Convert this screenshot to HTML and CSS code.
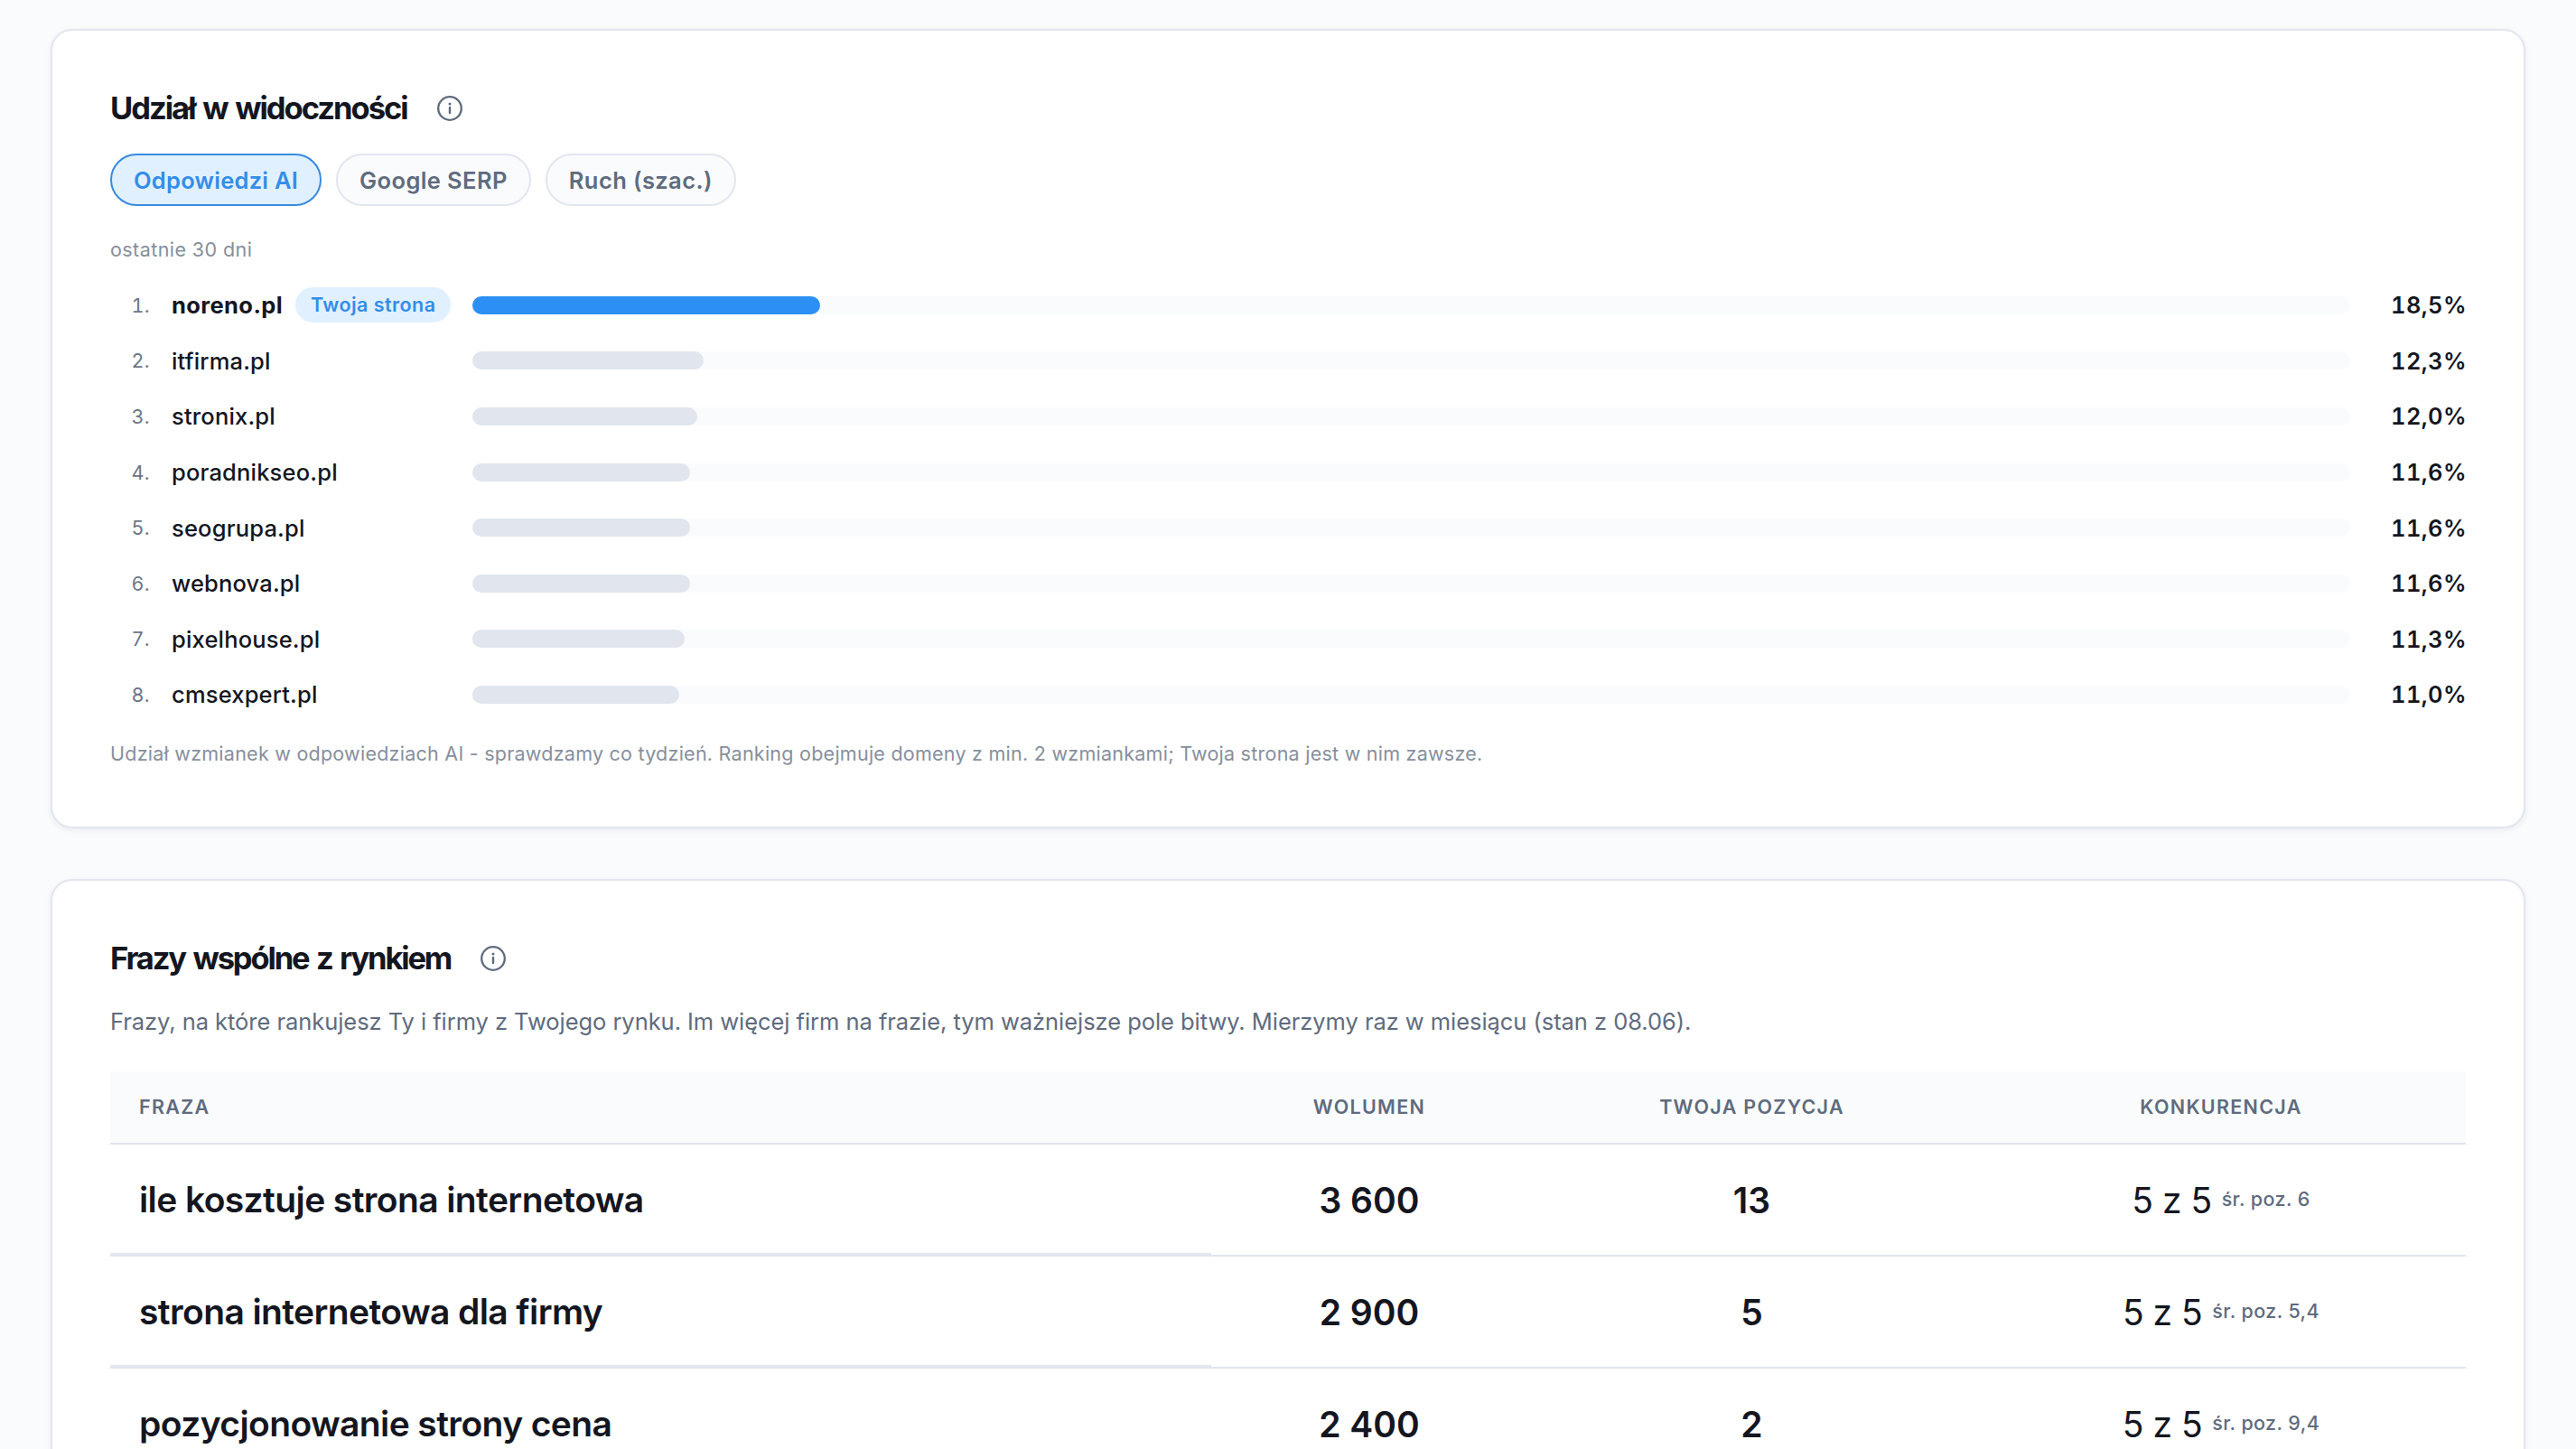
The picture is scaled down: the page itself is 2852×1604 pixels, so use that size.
FILE: index.html
```html
<!DOCTYPE html>
<html lang="pl">
<head>
  <meta charset="utf-8">
  <title>Widoczność</title>
  <link rel="stylesheet" href="styles.css">
</head>
<body>
  <main class="page">
    <section class="card">
      <div class="card-header">
        <h2 class="card-title">Udział w widoczności</h2>
        <svg class="info-icon" viewBox="0 0 28 28" fill="none">
          <circle cx="14" cy="14" r="12.8" stroke="currentColor" stroke-width="2.3"/>
          <circle cx="14" cy="9" r="1.5" fill="currentColor"/>
          <path d="M14 13v6" stroke="currentColor" stroke-width="2.4" stroke-linecap="round"/>
        </svg>
      </div>

      <div class="tabs">
        <button class="tab active">Odpowiedzi AI</button>
        <button class="tab">Google SERP</button>
        <button class="tab">Ruch (szac.)</button>
      </div>

      <p class="period">ostatnie 30 dni</p>

      <div class="ranking">
        <div class="rank-row own">
          <span class="rank-no">1.</span>
          <span class="rank-name">noreno.pl <span class="badge">Twoja strona</span></span>
          <div class="bar"><div class="bar-fill" style="width: 18.5%"></div></div>
          <span class="rank-value">18,5%</span>
        </div>
        <div class="rank-row">
          <span class="rank-no">2.</span>
          <span class="rank-name">itfirma.pl</span>
          <div class="bar"><div class="bar-fill" style="width: 12.3%"></div></div>
          <span class="rank-value">12,3%</span>
        </div>
        <div class="rank-row">
          <span class="rank-no">3.</span>
          <span class="rank-name">stronix.pl</span>
          <div class="bar"><div class="bar-fill" style="width: 12%"></div></div>
          <span class="rank-value">12,0%</span>
        </div>
        <div class="rank-row">
          <span class="rank-no">4.</span>
          <span class="rank-name">poradnikseo.pl</span>
          <div class="bar"><div class="bar-fill" style="width: 11.6%"></div></div>
          <span class="rank-value">11,6%</span>
        </div>
        <div class="rank-row">
          <span class="rank-no">5.</span>
          <span class="rank-name">seogrupa.pl</span>
          <div class="bar"><div class="bar-fill" style="width: 11.6%"></div></div>
          <span class="rank-value">11,6%</span>
        </div>
        <div class="rank-row">
          <span class="rank-no">6.</span>
          <span class="rank-name">webnova.pl</span>
          <div class="bar"><div class="bar-fill" style="width: 11.6%"></div></div>
          <span class="rank-value">11,6%</span>
        </div>
        <div class="rank-row">
          <span class="rank-no">7.</span>
          <span class="rank-name">pixelhouse.pl</span>
          <div class="bar"><div class="bar-fill" style="width: 11.3%"></div></div>
          <span class="rank-value">11,3%</span>
        </div>
        <div class="rank-row">
          <span class="rank-no">8.</span>
          <span class="rank-name">cmsexpert.pl</span>
          <div class="bar"><div class="bar-fill" style="width: 11%"></div></div>
          <span class="rank-value">11,0%</span>
        </div>
      </div>

      <p class="footnote">Udział wzmianek w odpowiedziach AI - sprawdzamy co tydzień. Ranking obejmuje domeny z min. 2 wzmiankami; Twoja strona jest w nim zawsze.</p>
    </section>

    <section class="card card-phrases">
      <div class="card-header">
        <h2 class="card-title">Frazy wspólne z rynkiem</h2>
        <svg class="info-icon" viewBox="0 0 28 28" fill="none">
          <circle cx="14" cy="14" r="12.8" stroke="currentColor" stroke-width="2.3"/>
          <circle cx="14" cy="9" r="1.5" fill="currentColor"/>
          <path d="M14 13v6" stroke="currentColor" stroke-width="2.4" stroke-linecap="round"/>
        </svg>
      </div>
      <p class="subtitle">Frazy, na które rankujesz Ty i firmy z Twojego rynku. Im więcej firm na frazie, tym ważniejsze pole bitwy. Mierzymy raz w miesiącu (stan z 08.06).</p>

      <table class="phrases">
        <thead>
          <tr>
            <th class="col-phrase">Fraza</th>
            <th class="col-volume">Wolumen</th>
            <th class="col-position">Twoja pozycja</th>
            <th class="col-rivals">Konkurencja</th>
          </tr>
        </thead>
        <tbody>
          <tr>
            <td class="phrase">ile kosztuje strona internetowa</td>
            <td class="number">3 600</td>
            <td class="number">13</td>
            <td><div class="rivals">5 z 5 <span class="avg">śr. poz. 6</span></div></td>
          </tr>
          <tr>
            <td class="phrase">strona internetowa dla firmy</td>
            <td class="number">2 900</td>
            <td class="number">5</td>
            <td><div class="rivals">5 z 5 <span class="avg">śr. poz. 5,4</span></div></td>
          </tr>
          <tr>
            <td class="phrase">pozycjonowanie strony cena</td>
            <td class="number">2 400</td>
            <td class="number">2</td>
            <td><div class="rivals">5 z 5 <span class="avg">śr. poz. 9,4</span></div></td>
          </tr>
        </tbody>
      </table>
    </section>
  </main>
</body>
</html>
```
FILE: styles.css
```css
* {
  box-sizing: border-box;
}

html {
  overflow: hidden;
}

body {
  height: 1604px;
  margin: 0;
  overflow: hidden;
  background: #fafbfd;
  color: #14161f;
  font-family: Inter, sans-serif;
  font-size: 25.5px;
}

h2, p {
  margin: 0;
}

.page {
  display: flex;
  flex-direction: column;
  gap: 56px;
  padding: 32px 56px 0;
}

.card {
  padding: 64px;
  background: #fff;
  border: 2px solid #e2e6ef;
  border-radius: 24px;
  box-shadow: 0 2px 6px rgba(20, 22, 50, 0.07);
}

.card-header {
  display: flex;
  align-items: center;
  gap: 33px;
  height: 44px;
}

.card-title {
  font-size: 34.5px;
  font-weight: 700;
  line-height: 44px;
  letter-spacing: -2px;
  word-spacing: 2.5px;
}

.card-phrases .card-title {
  letter-spacing: -2.15px;
}

.info-icon {
  width: 28px;
  height: 28px;
  color: #5f6b7e;
}

/* tabs */
.tabs {
  display: flex;
  gap: 16px;
  margin-top: 28px;
}

.tab {
  height: 58px;
  padding: 0 24px;
  background: #fafbfd;
  border: 2px solid #e2e6ef;
  border-radius: 29px;
  color: #5f6b7e;
  font-family: inherit;
  font-size: 25.5px;
  font-weight: 600;
  letter-spacing: 0.4px;
  white-space: nowrap;
}

.tab.active {
  background: #e0f0ff;
  border-color: #398be0;
  color: #338de9;
  letter-spacing: 0.25px;
}

.period {
  margin-top: 31px;
  color: #878f9d;
  font-size: 21.5px;
  line-height: 35px;
  letter-spacing: 0.43px;
}

/* ranking */
.ranking {
  display: flex;
  flex-direction: column;
  gap: 20px;
  margin-top: 23px;
}

.rank-row {
  display: grid;
  grid-template-columns: 44px 309px 1fr 104px;
  column-gap: 24px;
  align-items: center;
  height: 41.6px;
}

.rank-no {
  color: #6b7687;
  font-size: 21.5px;
  letter-spacing: 0.4px;
  text-align: right;
  font-variant-numeric: tabular-nums;
}

.rank-name {
  display: flex;
  align-items: center;
  justify-content: space-between;
  font-weight: 500;
  letter-spacing: 0.18px;
  white-space: nowrap;
}

.own .rank-name {
  font-weight: 700;
  letter-spacing: 0.4px;
}

.badge {
  height: 39px;
  padding: 0 16.5px;
  background: #e0f0ff;
  border-radius: 20px;
  color: #338de9;
  font-size: 21.5px;
  font-weight: 600;
  line-height: 38px;
  letter-spacing: 0.45px;
}

.bar {
  height: 20px;
  background: #fafbfd;
  border-radius: 10px;
}

.bar-fill {
  height: 20px;
  background: #e1e5ee;
  border-radius: 10px;
}

.own .bar-fill {
  background: #2b8ff4;
}

.rank-value {
  margin-right: -1px;
  font-weight: 600;
  letter-spacing: 0.4px;
  text-align: right;
  font-variant-numeric: tabular-nums;
}

.footnote {
  margin-top: 28px;
  color: #878f9d;
  font-size: 21.5px;
  line-height: 33px;
  letter-spacing: 0.25px;
}

.subtitle {
  margin-top: 27px;
  color: #5f6b7e;
  line-height: 42px;
  letter-spacing: -0.05px;
}

/* phrases table */
.phrases {
  width: 100%;
  margin-top: 34px;
  border-collapse: separate;
  border-spacing: 0;
  table-layout: fixed;
}

.phrases th {
  height: 81px;
  padding: 0;
  background: #fafbfd;
  border-bottom: 2px solid #e1e5eb;
  color: #5f6b7e;
  font-size: 21.5px;
  font-weight: 600;
  letter-spacing: 1.3px;
  text-align: center;
  text-transform: uppercase;
}

.phrases .col-phrase {
  width: 1219px;
  padding-left: 32px;
  text-align: left;
}

.col-volume {
  width: 350px;
}

.col-position {
  width: 497px;
}

.col-rivals {
  width: 542px;
}

.phrases td {
  height: 124px;
  padding: 2px 0 0;
  border-bottom: 2px solid #e1e5eb;
  font-size: 39px;
  text-align: center;
}

.phrases .phrase {
  padding: 2px 0 0 32px;
  border-bottom: 4px solid #e2e6ef;
  font-weight: 600;
  letter-spacing: -0.6px;
  text-align: left;
}

.phrases .number {
  font-weight: 600;
}

.rivals {
  display: flex;
  align-items: center;
  justify-content: center;
  gap: 11px;
  letter-spacing: -0.5px;
}

.avg {
  padding-bottom: 3px;
  color: #5f6b7e;
  font-size: 21.5px;
  font-weight: 500;
  letter-spacing: 0.4px;
}
```
